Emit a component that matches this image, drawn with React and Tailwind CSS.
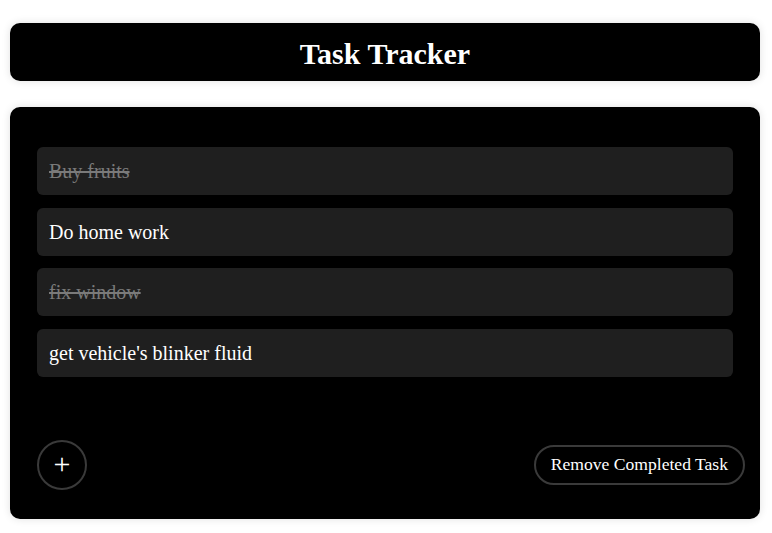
import React, { useState } from 'react';

const initialTasks = [
  { id: 1, text: 'Buy fruits', done: true },
  { id: 2, text: 'Do home work', done: false },
  { id: 3, text: 'fix window', done: true },
  { id: 4, text: "get vehicle's blinker fluid", done: false },
];

function App() {
  const [tasks, setTasks] = useState(initialTasks);

  const toggle = (id) =>
    setTasks(tasks.map((t) => (t.id === id ? { ...t, done: !t.done } : t)));

  return (
    <div className="min-h-screen bg-white pl-[10px] pr-[12px] pt-[23px] font-['Liberation_Serif','Times_New_Roman',serif]">
      <header className="h-[58px] bg-black rounded-[10px] shadow-[0_0_8px_rgba(0,0,0,0.12)] flex items-center justify-center pt-[3px]">
        <h1 className="text-white text-[30px] font-bold leading-none">Task Tracker</h1>
      </header>

      <div className="mt-[26px] bg-black rounded-[10px] shadow-[0_0_8px_rgba(0,0,0,0.12)] px-[27px] pt-[40px] pb-[29px]">
        <ul className="flex flex-col gap-[12.5px]">
          {tasks.map((t) => (
            <li
              key={t.id}
              onClick={() => toggle(t.id)}
              className={
                'h-[48px] bg-[#1f1f1f] rounded-[6px] px-[12px] flex items-center text-[20px] cursor-pointer ' +
                (t.done ? 'text-[#7a7a7a] line-through' : 'text-white')
              }
            >
              {t.text}
            </li>
          ))}
        </ul>

        <div className="mt-[63px] flex items-center justify-between">
          <button className="w-[50px] h-[50px] rounded-full border-2 border-[#3a3a3a] text-white text-[30px] leading-none flex items-center justify-center pb-[1px]">
            +
          </button>
          <button
            onClick={() => setTasks(tasks.filter((t) => !t.done))}
            className="mr-[-12px] h-[40px] rounded-full border-2 border-[#3a3a3a] px-[15px] text-white text-[17.6px]"
          >
            Remove Completed Task
          </button>
        </div>
      </div>
    </div>
  );
}

export default App;
